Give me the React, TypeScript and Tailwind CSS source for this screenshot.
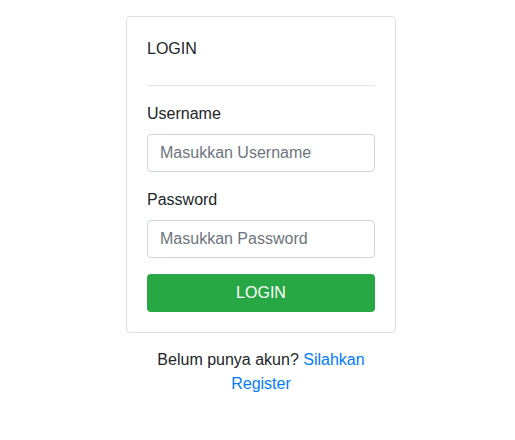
export default function App() {
  return (
    <div
      className="min-h-[440px] bg-white text-[#212529] text-base leading-6"
      style={{ fontFamily: '"Liberation Sans", Arial, sans-serif' }}
    >
      <div className="w-[270px] ml-[126px] pt-4">
        <div className="border border-[rgba(0,0,0,0.125)] rounded p-5">
          <div>LOGIN</div>
          <hr className="mt-6 mb-4 border-0 border-t border-[rgba(0,0,0,0.1)]" />
          <div className="mb-4">
            <label className="block mb-2">Username</label>
            <input
              type="text"
              placeholder="Masukkan Username"
              className="block w-full h-[38px] px-3 py-1.5 border border-[#ced4da] rounded text-base placeholder:text-[#6c757d] outline-none"
            />
          </div>
          <div className="mb-4">
            <label className="block mb-2">Password</label>
            <input
              type="password"
              placeholder="Masukkan Password"
              className="block w-full h-[38px] px-3 py-1.5 border border-[#ced4da] rounded text-base placeholder:text-[#6c757d] outline-none"
            />
          </div>
          <button className="block w-full h-[38px] bg-[#28a745] text-white rounded text-base">
            LOGIN
          </button>
        </div>
        <p className="mt-[15px] text-center">
          Belum punya akun?{" "}
          <a href="#" className="text-[#007bff]">
            Silahkan Register
          </a>
        </p>
      </div>
    </div>
  );
}
